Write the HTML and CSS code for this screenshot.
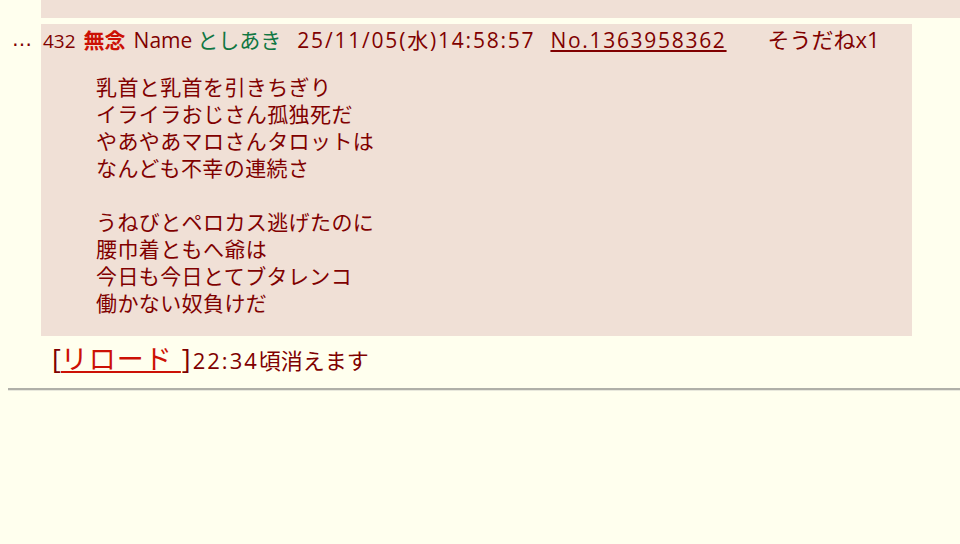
FILE: index.html
```html
<!DOCTYPE html>
<html>

<head>
	<meta charset="UTF-8">
	<title>スレッド</title>
	<link rel="stylesheet" href="styles.css">
</head>

<body>
	<div class="thread">
		<div class="row">
			<div class="side"></div>
			<div class="rtd prev"></div>
		</div>

		<div class="row">
			<div class="side">…</div>
			<div class="rtd">
				<div class="head">
					<span class="rsc">432</span>
					<span class="csb">無念</span>
					<span class="cnm">Name</span>
					<span class="cnw">としあき</span>
					<span class="cdate">25/11/05(水)14:58:57</span>
					<a class="cno" href="#">No.1363958362</a>
					<span class="sod">そうだねx1</span>
				</div>
				<blockquote>
					乳首と乳首を引きちぎり<br>
					イライラおじさん孤独死だ<br>
					やあやあマロさんタロットは<br>
					なんども不幸の連続さ<br>
					<br>
					うねびとペロカス逃げたのに<br>
					腰巾着ともへ爺は<br>
					今日も今日とてブタレンコ<br>
					働かない奴負けだ
				</blockquote>
			</div>
		</div>

		<div class="reload">
			<span class="bracket">[</span><a href="#">リロード&nbsp;</a><span class="bracket close">]</span><span class="expire"><span class="num">22:34</span>頃消えます</span>
		</div>
		<hr>
	</div>
</body>

</html>
```

FILE: styles.css
```css
html,
body {
	margin: 0;
	padding: 0;
	background: #ffffee;
	color: #800000;
	font-family: "Open Sans", "Noto Sans CJK JP", sans-serif;
	font-size: 21px;
	overflow: hidden;
}

.thread {
	padding-left: 8px;
}

.row {
	display: flex;
	margin-bottom: 6px;
}

.side {
	width: 29px;
	padding-left: 4px;
	line-height: 30px;
	font-family: "DejaVu Sans", sans-serif;
	font-size: 20px;
}

.rtd {
	background: #f0e0d6;
	width: 871px;
	padding-left: 2px;
	box-sizing: border-box;
}

.rtd.prev {
	flex: 1;
	height: 18px;
}

.head {
	display: flex;
	align-items: baseline;
	line-height: 30px;
	white-space: nowrap;
}

.rsc {
	font-size: 19px;
}

.csb {
	color: #cc1105;
	font-weight: bold;
	margin-left: 8px;
}

.cnm {
	margin-left: 8px;
}

.cnw {
	color: #117743;
	margin-left: 5px;
}

.cdate {
	margin-left: 16px;
	letter-spacing: 1.8px;
}

.cno {
	color: #800000;
	margin-left: 15px;
	letter-spacing: 1.7px;
}

.sod {
	margin-left: 41px;
	font-size: 22px;
}

blockquote {
	margin: 18px 0 19px 53px;
	line-height: 27px;
	letter-spacing: 0.4px;
}

.reload {
	padding-left: 44px;
	line-height: 34px;
	font-size: 22px;
}

.reload .bracket {
	font-size: 27px;
}

.reload .close {
	margin-left: 1px;
	margin-right: 2px;
}

.reload a {
	color: #cc1105;
	font-size: 27px;
	letter-spacing: 1px;
}

.reload .num {
	letter-spacing: 2px;
}

hr {
	margin: 11px 0 0 0;
	border: none;
	border-top: 2px solid #b0b0a8;
	border-bottom: 1px solid #e8e8dc;
}
```
